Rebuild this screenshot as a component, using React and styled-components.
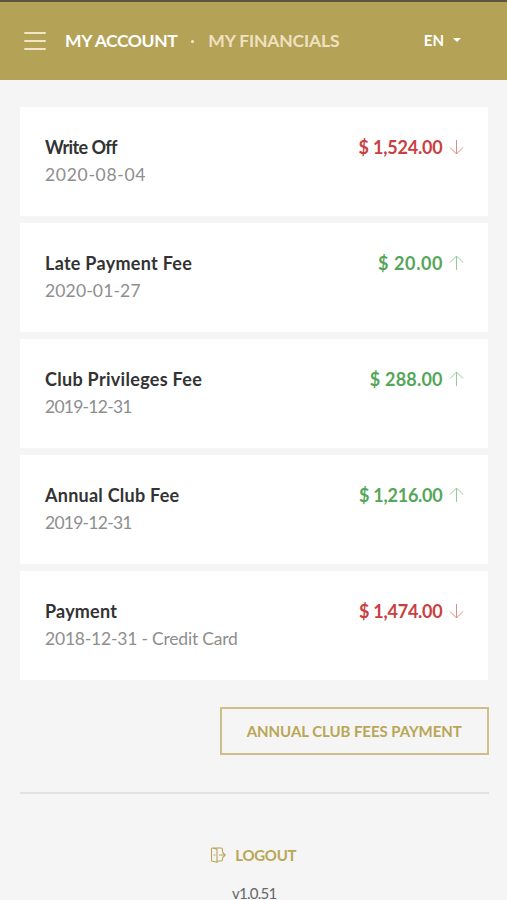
import styled, { createGlobalStyle } from 'styled-components';

const GlobalStyle = createGlobalStyle`
  * {
    box-sizing: border-box;
  }
  body {
    margin: 0;
    height: 900px;
    overflow: hidden;
    background: #f5f5f5;
    font-family: Lato, 'Open Sans', sans-serif;
  }
`;

const Page = styled.div`
  width: 507px;
  height: 900px;
  overflow: hidden;
`;

const Header = styled.header`
  display: flex;
  align-items: center;
  height: 80px;
  padding: 0 46px 0 24px;
  border-top: 2px solid #5c5340;
  background: #b4a257;
  color: #fff;
`;

const MenuButton = styled.button`
  display: flex;
  flex-direction: column;
  justify-content: space-between;
  width: 22px;
  height: 18px;
  margin: 0 19px 1px 0;
  padding: 0;
  border: 0;
  background: none;
  span {
    height: 2px;
    border-radius: 1px;
    background: #f0e5c4;
  }
`;

const Crumb = styled.span`
  font-size: 17.5px;
  line-height: 22px;
  font-weight: 700;
  color: ${({ $muted }) => ($muted ? '#efe1c0' : '#fff')};
  letter-spacing: ${({ $muted }) => ($muted ? -0.17 : -0.4)}px;
  white-space: nowrap;
`;

const Dot = styled.i`
  width: 3px;
  height: 3px;
  margin: 0 14px 0 14px;
  border-radius: 50%;
  background: #f6edd4;
`;

const Language = styled.button`
  display: flex;
  align-items: center;
  gap: 9px;
  margin: 0 0 2px auto;
  padding: 0;
  border: 0;
  background: none;
  color: #fff;
  font: 700 15px/20px Lato, sans-serif;
`;

const Caret = styled.i`
  border: 4px solid transparent;
  border-top-color: #fff;
  border-bottom: 0;
`;

const Main = styled.main`
  padding: 26.5px 18.5px 0 20px;
`;

const List = styled.div`
  display: flex;
  flex-direction: column;
  gap: 6.5px;
  padding-right: 0.5px;
`;

const Card = styled.div`
  display: flex;
  justify-content: space-between;
  height: 109.6px;
  padding: 27.5px 24.5px 0 25px;
  background: #fff;
`;

const Title = styled.div`
  font-size: 18px;
  line-height: 27px;
  font-weight: 700;
  color: #333;
  letter-spacing: ${({ $track }) => $track || 0}px;
`;

const Meta = styled.div`
  font-size: 17.5px;
  line-height: 28px;
  color: #8e8e8e;
  letter-spacing: ${({ $track }) => $track || 0}px;
`;

const Amount = styled.div`
  display: flex;
  align-items: center;
  gap: 6px;
  height: 26px;
  font-size: 18px;
  font-weight: 700;
  color: ${({ $down }) => ($down ? '#c9403f' : '#55a65a')};
  letter-spacing: ${({ $track }) => $track || 0}px;
  svg {
    margin-left: ${({ $track }) => -Math.max($track, 0)}px;
    opacity: 0.6;
  }
`;

const Actions = styled.div`
  display: flex;
  justify-content: flex-end;
  padding: 26.5px 0 36.5px;
  border-bottom: 2px solid #e2e2e2;
`;

const PayButton = styled.button`
  width: 268.5px;
  height: 48.5px;
  padding: 0;
  border: 2px solid #cdbf87;
  background: transparent;
  color: #b9a656;
  font: 700 15px/20px Lato, sans-serif;
  letter-spacing: -0.06px;
`;

const Footer = styled.footer`
  display: flex;
  flex-direction: column;
  align-items: center;
  padding-top: 49px;
`;

const Logout = styled.a`
  display: flex;
  align-items: center;
  gap: 9px;
  margin-right: 2px;
  font-size: 15px;
  line-height: 24px;
  font-weight: 700;
  letter-spacing: -0.3px;
  color: #b9a656;
`;

const Version = styled.div`
  margin-top: 16px;
  font-size: 15px;
  line-height: 20px;
  letter-spacing: -0.7px;
  color: #666;
`;

const transactions = [
  {
    title: 'Write Off',
    titleTrack: -0.6,
    meta: '2020-08-04',
    metaTrack: 0.7,
    amount: '$ 1,524.00',
    amountTrack: -0.2,
    down: true,
  },
  {
    title: 'Late Payment Fee',
    titleTrack: 0.28,
    meta: '2020-01-27',
    metaTrack: 0.15,
    amount: '$ 20.00',
    amountTrack: 0.6,
  },
  {
    title: 'Club Privileges Fee',
    titleTrack: 0.3,
    meta: '2019-12-31',
    metaTrack: -0.75,
    amount: '$ 288.00',
    amountTrack: 0.2,
  },
  {
    title: 'Annual Club Fee',
    titleTrack: 0.25,
    meta: '2019-12-31',
    metaTrack: -0.75,
    amount: '$ 1,216.00',
    amountTrack: -0.25,
  },
  {
    title: 'Payment',
    titleTrack: 0.2,
    meta: '2018-12-31 - Credit Card',
    metaTrack: -0.2,
    amount: '$ 1,474.00',
    amountTrack: -0.25,
    down: true,
  },
];

const Arrow = ({ down }) => (
  <svg width="15" height="16" viewBox="0 0 15 16" fill="none" stroke="currentColor" strokeWidth="1">
    <path d={down ? 'M7.5 1v14M1 8.5l6.5 6.5L14 8.5' : 'M7.5 15V1M1 7.5L7.5 1 14 7.5'} />
  </svg>
);

const DoorIcon = () => (
  <svg width="16" height="16" viewBox="0 0 16 16" fill="none" stroke="currentColor" strokeWidth="1.1">
    <path d="M7 2.300L2.800 1Q1.500 .8 1.500 2v11q0 1 1 1.200l4.500 1zM2.500 1h8.500q1.500 0 1.500 1.500v3M12.500 10.500v2q0 1.500-1.500 1.500H7M3.500 8h2M9 8h6M12.700 5.500L15.200 8l-2.500 2.500" />
  </svg>
);

const App = () => (
  <Page>
    <GlobalStyle />
    <Header>
      <MenuButton aria-label="Menu">
        <span />
        <span />
        <span />
      </MenuButton>
      <Crumb>MY ACCOUNT</Crumb>
      <Dot />
      <Crumb $muted>MY FINANCIALS</Crumb>
      <Language>
        EN
        <Caret />
      </Language>
    </Header>
    <Main>
      <List>
        {transactions.map((item) => (
          <Card key={item.title}>
            <div>
              <Title $track={item.titleTrack}>{item.title}</Title>
              <Meta $track={item.metaTrack}>{item.meta}</Meta>
            </div>
            <Amount $down={item.down} $track={item.amountTrack}>
              {item.amount}
              <Arrow down={item.down} />
            </Amount>
          </Card>
        ))}
      </List>
      <Actions>
        <PayButton>ANNUAL CLUB FEES PAYMENT</PayButton>
      </Actions>
      <Footer>
        <Logout>
          <DoorIcon />
          LOGOUT
        </Logout>
        <Version>v1.0.51</Version>
      </Footer>
    </Main>
  </Page>
);

export default App;
